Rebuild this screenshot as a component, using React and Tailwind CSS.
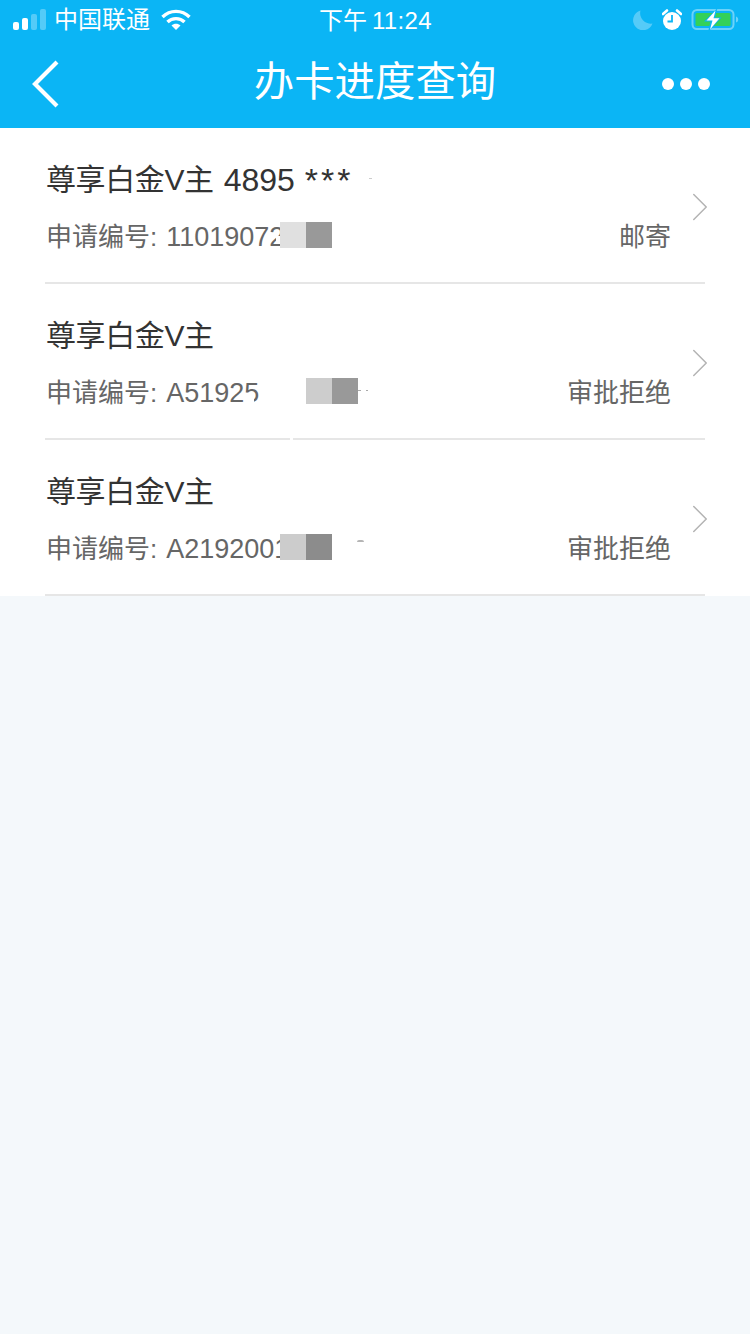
import { ChevronRight } from "lucide-react"

const font = { fontFamily: '"Liberation Sans", "Noto Sans CJK SC", sans-serif' }

const rows = [
  {
    number: "4895",
    label: "11019072",
    status: "邮寄",
    textWidth: "w-[234px]",
    blocks: ["bg-[#e0e0e0]", "bg-[#999999]"],
    specks: [
      { id: "a", className: "left-[324px] top-[50px] h-px w-[3px] bg-[#cccccc]" },
      { id: "b", className: "left-[231px] top-[108px] h-[8px] w-[4px] bg-white" },
    ],
  },
  {
    label: "A51925",
    status: "审批拒绝",
    textWidth: "w-[260px]",
    blocks: ["bg-[#cdcdcd]", "bg-[#999999]"],
    specks: [
      { id: "a", className: "left-[199px] top-[113px] h-[7px] w-[10px] bg-white" },
      { id: "b", className: "left-[313px] top-[106px] h-px w-[3px] bg-[#aaaaaa]" },
      { id: "c", className: "left-[321px] top-[106px] h-px w-[2px] bg-[#aaaaaa]" },
      { id: "d", className: "left-[245px] top-[154px] h-[2px] w-[3px] bg-white" },
    ],
  },
  {
    label: "A2192001",
    status: "审批拒绝",
    textWidth: "w-[234px]",
    blocks: ["bg-[#cccccc]", "bg-[#8c8c8c]"],
    specks: [{ id: "a", className: "left-[312px] top-[100px] h-[2px] w-[7px] rounded-t-full bg-[#b5b5b5]" }],
  },
]

function Signal() {
  return (
    <svg width="34" height="22" viewBox="0 0 34 22" fill="#fff">
      <rect x="0" y="13" width="6" height="8" rx="2" />
      <rect x="9" y="9" width="6" height="12" rx="2" />
      <rect x="18" y="5" width="6" height="16" rx="2" opacity="0.3" />
      <rect x="27" y="0" width="6" height="21" rx="2" opacity="0.3" />
    </svg>
  )
}

function Wifi() {
  return (
    <svg width="30" height="22" viewBox="0 0 30 22" fill="none" stroke="#fff" strokeWidth="3.4">
      <path d="M1.5 8 C9 0.5 21 0.5 28.5 8" />
      <path d="M6.5 13 C11 8.5 19 8.5 23.5 13" />
      <path d="M10.5 16.5 L15 21 L19.5 16.5 C17 14 13 14 10.5 16.5 Z" fill="#fff" stroke="none" />
    </svg>
  )
}

function Moon() {
  return (
    <svg width="20" height="20" viewBox="0 0 20 20" fill="#fff" opacity="0.3">
      <path d="M7.5 0.5 A10 10 0 1 0 19.5 13.5 A10.5 10.5 0 0 1 7.5 0.5 Z" />
    </svg>
  )
}

function Alarm() {
  return (
    <svg width="20" height="22" viewBox="0 0 20 22">
      <circle cx="10" cy="12" r="9" fill="#fff" />
      <path d="M1 5 L5 1.5 M15 1.5 L19 5" stroke="#fff" strokeWidth="2.6" strokeLinecap="round" />
      <path d="M10 6 V12.5 H5.5" fill="none" stroke="#0bb5f5" strokeWidth="1.8" />
    </svg>
  )
}

function Battery() {
  return (
    <svg width="48" height="24" viewBox="0 0 48 24">
      <rect x="1.5" y="2" width="41" height="19" rx="4.5" fill="none" stroke="#fff" strokeOpacity="0.4" strokeWidth="2" />
      <rect x="4.5" y="5" width="35" height="13" rx="1.5" fill="#34d158" />
      <path d="M45 8.5 C46.5 9 47.2 10 47.2 11.5 C47.2 13 46.5 14 45 14.5 Z" fill="#fff" fillOpacity="0.4" />
      <path d="M26.5 0 L13 13.5 H19.5 L17 24 L30.5 9.5 H24 Z" fill="#0bb5f5" />
      <path d="M24.5 2.5 L15.5 12.5 H21.5 L19 21.5 L28.5 10.2 H22.5 Z" fill="#fff" />
    </svg>
  )
}

function StatusBar() {
  return (
    <div className="relative flex h-10 items-center justify-between pl-[13px] pr-[11px] text-white">
      <div className="flex items-center">
        <Signal />
        <span className="ml-[7px] text-[24px] leading-[42px]">中国联通</span>
        <span className="ml-[11px] flex"><Wifi /></span>
      </div>
      <div className="absolute left-[319px] top-0 flex text-[24px] leading-[42px]">
        <span>下午</span>
        <span className="ml-[5px] tracking-[0.3px]">11:24</span>
      </div>
      <div className="flex items-center gap-2">
        <Moon />
        <span className="ml-[1px] flex"><Alarm /></span>
        <span className="ml-[1px] flex"><Battery /></span>
      </div>
    </div>
  )
}

function NavBar() {
  return (
    <div className="grid h-[88px] grid-cols-[1fr_auto_1fr] items-center px-[30px] text-white">
      <svg width="32" height="50" viewBox="0 0 32 50" fill="none" stroke="#fff" strokeWidth="4.2">
        <path d="M27 3 L5 25 L27 47" />
      </svg>
      <h1 className="-mt-1 text-[40.4px] font-normal leading-none">办卡进度查询</h1>
      <div className="mr-[10px] flex items-center gap-1.5 justify-self-end">
        <span className="h-3 w-3 rounded-full bg-white" />
        <span className="h-3 w-3 rounded-full bg-white" />
        <span className="h-3 w-3 rounded-full bg-white" />
      </div>
    </div>
  )
}

function Row({ row }) {
  return (
    <div className="relative mx-[45px] h-[156px] border-b-2 border-[#e6e6e6] pl-[1px] pt-[32px]">
      <div className="flex h-[40px] items-center text-[30px] leading-[40px] text-[#333333]">
        <span className="tracking-[-0.4px]">尊享白金V主</span>
        {row.number && (
          <>
            <span className="ml-[10px] text-[32px]">{row.number}</span>
            <span className="ml-[10px] text-[34px] tracking-[3px]">***</span>
          </>
        )}
      </div>
      <div className="mt-[22px] flex h-[30px] items-start justify-between pr-[34px] text-[26px] text-[#666666]">
        <div className="flex items-start">
          <div className={`${row.textWidth} flex items-baseline whitespace-nowrap leading-[30px]`}>
            <span>申请编号:</span>
            <span className="ml-[9px] text-[27px]">{row.label}</span>
          </div>
          {row.blocks.map((color) => (
            <span key={color} className={`h-[26px] w-[26px] ${color}`} />
          ))}
        </div>
        <span className="leading-[30px]">{row.status}</span>
      </div>
      <ChevronRight
        className="absolute right-[-20px] top-[54px] text-[#b3b3b3]"
        size={50}
        strokeWidth={1.5}
        absoluteStrokeWidth
      />
      {row.specks.map((speck) => (
        <span key={speck.id} className={`absolute ${speck.className}`} />
      ))}
    </div>
  )
}

export default function App() {
  return (
    <div className="min-h-[1334px] bg-[#f4f8fb]" style={font}>
      <div className="bg-[#0bb5f5]">
        <StatusBar />
        <NavBar />
      </div>
      <div className="bg-white">
        {rows.map((row) => (
          <Row key={row.label} row={row} />
        ))}
      </div>
    </div>
  )
}
